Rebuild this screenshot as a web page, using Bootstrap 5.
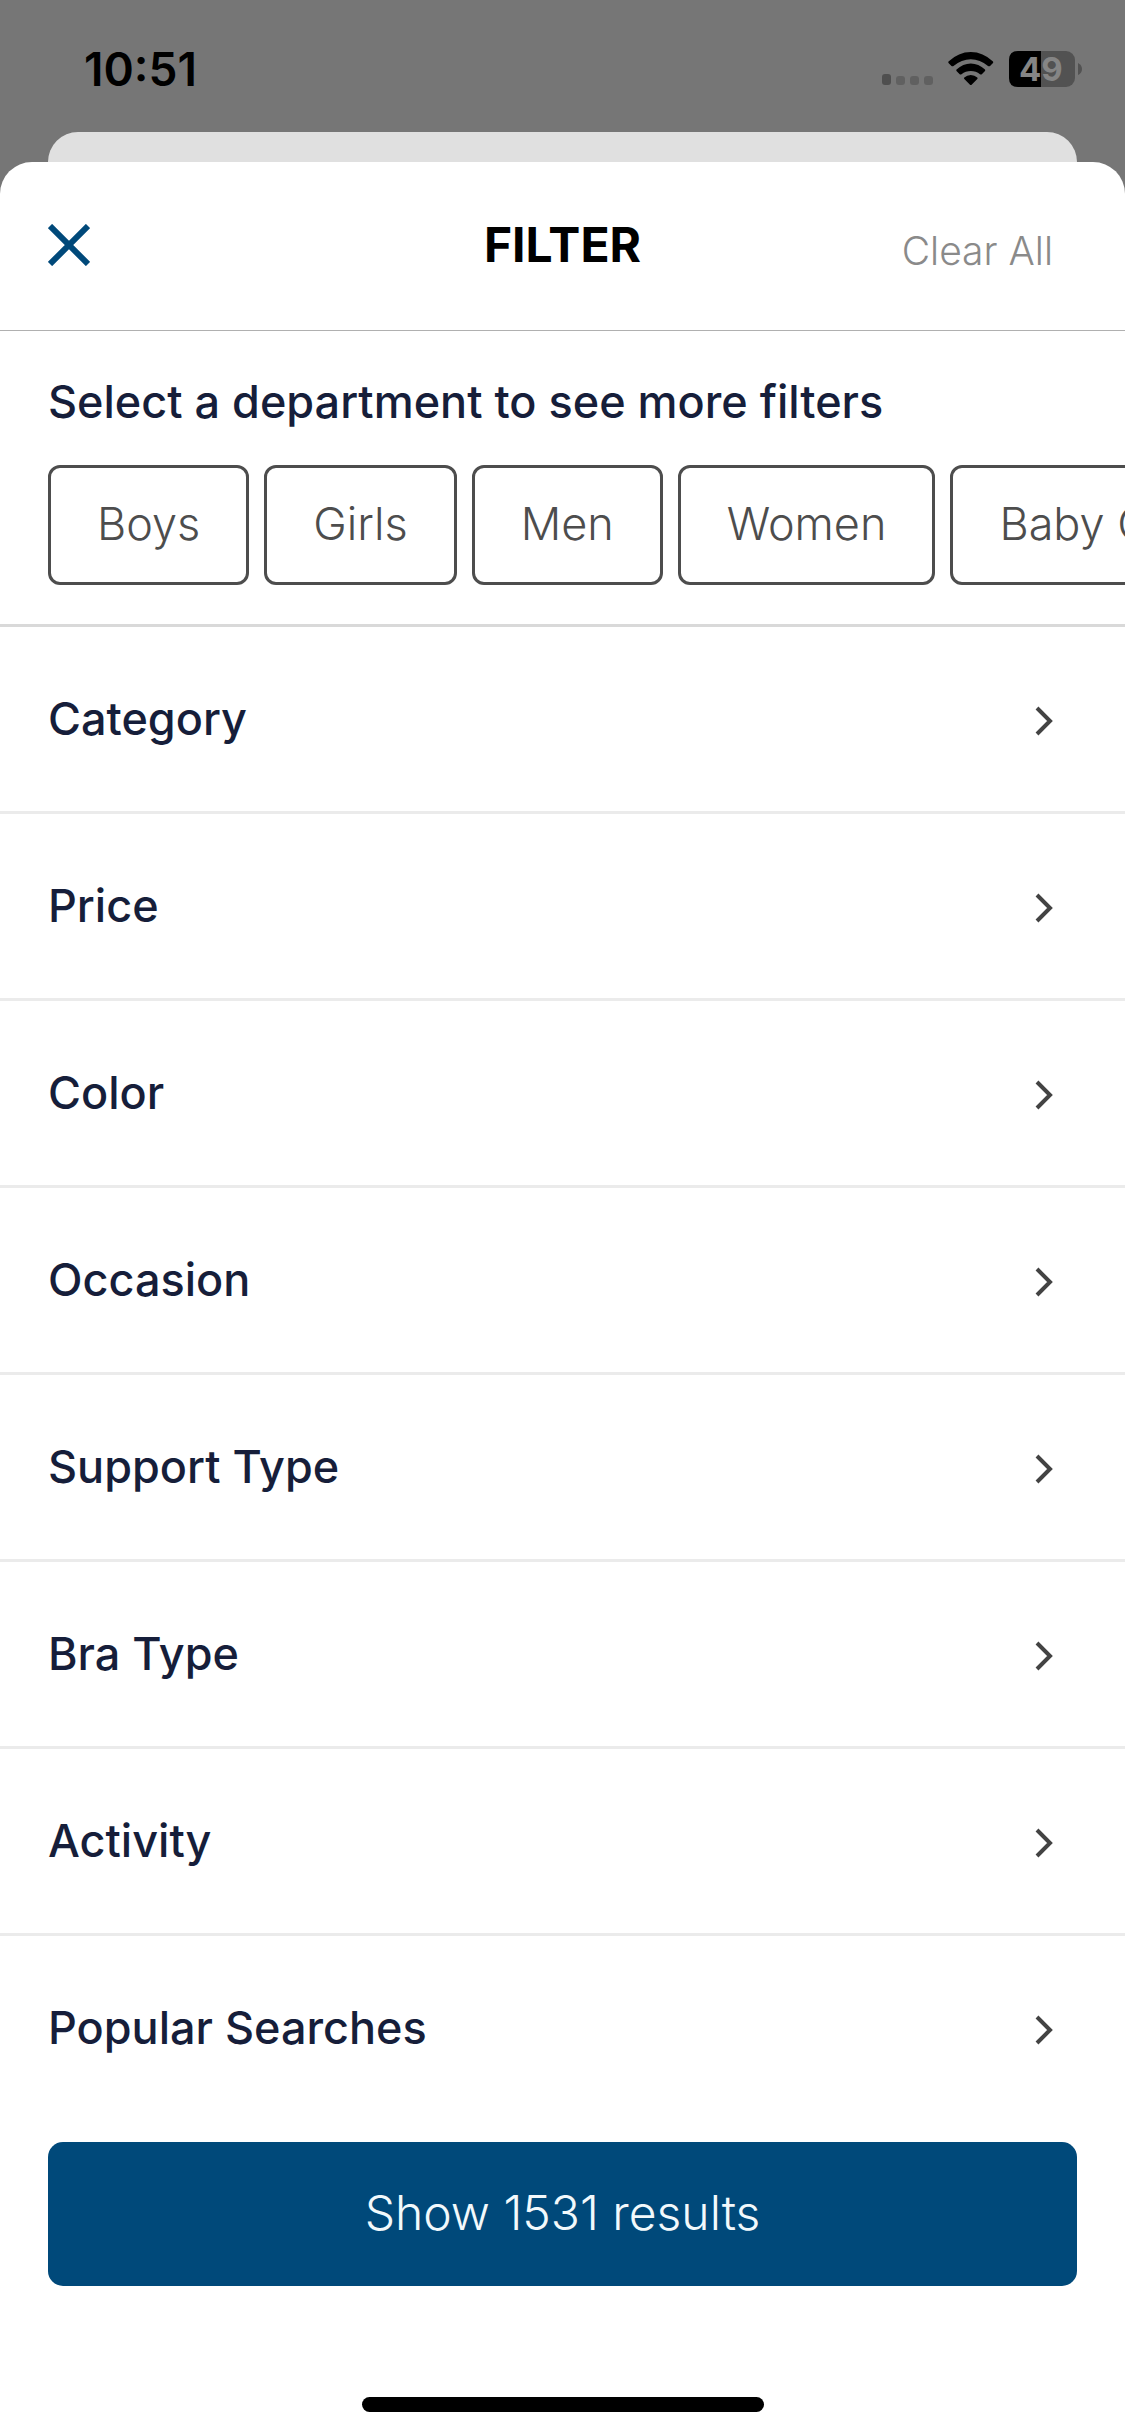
<!DOCTYPE html>
<html lang="en">
<head>
<meta charset="utf-8">
<meta name="viewport" content="width=device-width, initial-scale=1">
<title>Filter</title>
<link href="https://cdn.jsdelivr.net/npm/bootstrap@5.3.0/dist/css/bootstrap.min.css" rel="stylesheet">
<style>
  body { background: #767676; font-family: Inter, "Open Sans", sans-serif; }
  .status-bar { height: 132px; padding: 42px 43px 0 84px; color: #000; }
  .status-time { font-size: 46px; line-height: 54px; font-weight: 600; }
  .back-sheet { height: 30px; margin: 0 48px; background: #e0e0e0; border-radius: 30px 30px 0 0; }
  .sheet { background: #fff; border-radius: 32px 32px 0 0; }
  .sheet-head { height: 169px; padding: 0 48px 2px; border-bottom: 1px solid #b0b0b0; }
  .sheet-title { font-size: 48px; line-height: 54px; font-weight: 700; color: #000; }
  .icon-btn, .text-btn { border: 0; background: none; padding: 0; }
  .text-btn { font-size: 39px; line-height: 54px; font-weight: 300; color: #8a8a8a; margin: 12px 24px 0 0; }
  .departments { padding: 44px 0 39px; border-bottom: 3px solid #d9d9d9; }
  .departments h2, .filter-row { font-size: 45px; line-height: 54px; font-weight: 500; color: #161e3a; }
  .departments h2 { margin: 0 48px 36px; }
  .chip-strip { gap: 15px; padding-left: 48px; }
  .chip { height: 120px; padding: 0 46px 3px; border: 3px solid #4d4d4d; border-radius: 12px; background: #fff; color: #4d4d4d; font-size: 45px; font-weight: 300; line-height: 54px; }
  .filter-row { height: 187px; padding: 0 72px 0 48px; border: 0; border-bottom: 3px solid #ebebeb; background: none; }
  .filter-row:last-child { border-bottom-color: transparent; }
  .filter-row svg { margin-top: 3px; }
  .sheet-foot { padding: 19px 48px 24px; background: #fff; }
  .show-btn, .show-btn:hover { height: 144px; border: 0; border-radius: 15px; background: #00497a; color: #f2f9fc; font-size: 48px; line-height: 54px; font-weight: 300; padding: 0 0 3px; }
  .home-bar { width: 402px; height: 15px; border-radius: 8px; background: #000; margin-top: 111px; }
</style>
</head>
<body>
<div class="d-flex flex-column min-vh-100 overflow-hidden">
  <header class="status-bar d-flex justify-content-between align-items-start">
    <span class="status-time">10:51</span>
    <svg width="200" height="54" viewBox="882 42 200 54" role="img" aria-label="Wi-Fi connected, battery 49 percent">
      <rect x="882" y="74" width="9" height="11" rx="3" fill="#4f4f4f"/>
      <g fill="#606060"><rect x="896" y="76" width="9" height="9" rx="3"/><rect x="910" y="76" width="9" height="9" rx="3"/><rect x="924" y="76" width="9" height="9" rx="3"/></g>
      <path d="M948.500 61.500Q958.500 52 970.800 52T993 61.500Q993.500 62.300 993 63L990 66Q989 66.500 988 66Q980 59.200 970.800 59.200T953.500 66Q952.500 66.500 951.500 66L948.500 63Q948 62.300 948.500 61.500Z"/>
      <path d="M956.500 69.500Q963 63.500 970.800 63.500T985 69.500Q985.500 70.300 985 71L981.800 74.200Q981 74.700 980 74.200Q976 71 970.800 71T961.500 74.200Q960.500 74.700 959.700 74.200L956.500 71Q956 70.300 956.500 69.500Z"/>
      <path d="M964.300 77.500Q967 75 970.800 75T977.300 77.500Q978 78.300 977.300 79L971.600 84.700Q970.800 85.300 970 84.700L964.300 79Q963.600 78.300 964.300 77.500Z"/>
      <rect x="1009" y="51" width="66" height="36" rx="9" fill="#525252"/>
      <path d="M1041 51H1018Q1009 51 1009 60V78Q1009 87 1018 87H1041Z"/>
      <path d="M1078 63Q1082 65 1082 69T1078 75Z" fill="#525252"/>
      <text x="1019" y="81" font-size="33" font-weight="700" fill="#858585">49</text>
    </svg>
  </header>
  <div class="back-sheet"></div>

  <main class="sheet d-flex flex-column flex-grow-1">
    <div class="sheet-head row g-0 align-items-center">
      <div class="col d-flex">
        <button class="icon-btn d-flex" type="button" aria-label="Close">
          <svg width="42" height="42" viewBox="0 0 42 42" fill="none" stroke="#00497a" stroke-width="6"><path d="M2 2 40 40M40 2 2 40"/></svg>
        </button>
      </div>
      <div class="col-auto"><h1 class="sheet-title mb-0">FILTER</h1></div>
      <div class="col text-end"><button class="text-btn" type="button">Clear All</button></div>
    </div>

    <section class="departments">
      <h2>Select a department to see more filters</h2>
      <div class="chip-strip d-flex overflow-hidden">
        <button class="chip flex-shrink-0" type="button">Boys</button>
        <button class="chip flex-shrink-0" type="button">Girls</button>
        <button class="chip flex-shrink-0" type="button">Men</button>
        <button class="chip flex-shrink-0" type="button">Women</button>
        <button class="chip flex-shrink-0" type="button">Baby Girl</button>
      </div>
    </section>

    <svg class="d-none"><symbol id="chevron" viewBox="0 0 18 30"><path d="M2 2 15 15 2 28" fill="none" stroke="#434343" stroke-width="4"/></symbol></svg>
    <nav class="d-flex flex-column" aria-label="Filters">
      <button class="filter-row d-flex justify-content-between align-items-center" type="button">Category<svg width="18" height="30"><use href="#chevron"/></svg></button>
      <button class="filter-row d-flex justify-content-between align-items-center" type="button">Price<svg width="18" height="30"><use href="#chevron"/></svg></button>
      <button class="filter-row d-flex justify-content-between align-items-center" type="button">Color<svg width="18" height="30"><use href="#chevron"/></svg></button>
      <button class="filter-row d-flex justify-content-between align-items-center" type="button">Occasion<svg width="18" height="30"><use href="#chevron"/></svg></button>
      <button class="filter-row d-flex justify-content-between align-items-center" type="button">Support Type<svg width="18" height="30"><use href="#chevron"/></svg></button>
      <button class="filter-row d-flex justify-content-between align-items-center" type="button">Bra Type<svg width="18" height="30"><use href="#chevron"/></svg></button>
      <button class="filter-row d-flex justify-content-between align-items-center" type="button">Activity<svg width="18" height="30"><use href="#chevron"/></svg></button>
      <button class="filter-row d-flex justify-content-between align-items-center" type="button">Popular Searches<svg width="18" height="30"><use href="#chevron"/></svg></button>
    </nav>

    <footer class="sheet-foot mt-auto">
      <button class="show-btn btn w-100" type="button">Show 1531 results</button>
      <div class="home-bar mx-auto"></div>
    </footer>
  </main>
</div>
<script src="https://cdn.jsdelivr.net/npm/bootstrap@5.3.0/dist/js/bootstrap.bundle.min.js"></script>
</body>
</html>
